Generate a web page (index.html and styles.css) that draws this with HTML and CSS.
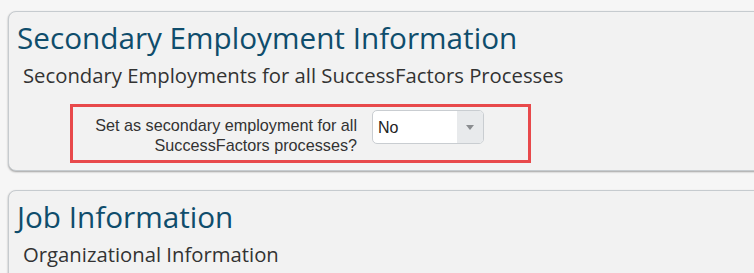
FILE: index.html
```html
<!DOCTYPE html>
<html lang="en">
<head>
  <meta charset="UTF-8">
  <title>Employment Information</title>
  <link rel="stylesheet" href="styles.css">
</head>
<body>
  <div class="page">
    <div class="card">
      <h2 class="card-title">Secondary Employment Information</h2>
      <div class="card-subtitle">Secondary Employments for all SuccessFactors Processes</div>
      <div class="field-row highlight">
        <label class="field-label">Set as secondary employment for all SuccessFactors processes?</label>
        <div class="select">
          <span class="select-value">No</span>
          <span class="select-btn"><span class="caret"></span></span>
        </div>
      </div>
    </div>

    <div class="card">
      <h2 class="card-title">Job Information</h2>
      <div class="card-subtitle">Organizational Information</div>
      <div class="card-spacer"></div>
    </div>
  </div>
</body>
</html>
```

FILE: styles.css
```css
html, body {
  margin: 0;
  padding: 0;
  overflow: hidden;
}
body {
  background-color: #f6f6f6;
  font-family: "Open Sans", Arial, sans-serif;
}
.page {
  width: 820px;
  padding: 11px 0 0 8px;
}
.card {
  background-color: #f2f2f2;
  border: 1px solid #c6cbcf;
  border-radius: 8px;
  box-shadow: 0 1px 2px rgba(0,0,0,0.35);
  padding: 6px 0 7px 8px;
  margin-bottom: 19px;
}
.card-title {
  margin: 0;
  font-size: 29.7px;
  line-height: 40px;
  font-weight: normal;
  color: #0f4d6c;
}
.card-subtitle {
  margin: 4px 0 0 6px;
  font-size: 20.3px;
  line-height: 26px;
  color: #333;
}
.field-row {
  display: flex;
  align-items: flex-start;
  margin: 16px 0 0 53px;
}
.highlight {
  box-sizing: border-box;
  width: 461px;
  border: 3px solid #e8494b;
  padding: 3px 0 5px 0;
}
.field-label {
  width: 274px;
  margin: 5px 0 0 10px;
  font-family: Arial, "Liberation Sans", sans-serif;
  font-size: 16.2px;
  line-height: 20px;
  text-align: right;
  color: #333;
}
.select {
  display: flex;
  width: 112px;
  height: 34px;
  box-sizing: border-box;
  margin: 0 0 0 15px;
  border: 1px solid #c9cdd1;
  border-radius: 5px;
  background-color: #fff;
  overflow: hidden;
}
.select-value {
  flex: 1;
  padding: 8px 0 0 5px;
  font-family: Arial, "Liberation Sans", sans-serif;
  font-size: 16px;
  color: #222;
}
.select-btn {
  width: 26px;
  background-color: #e8eaec;
  display: flex;
  align-items: center;
  justify-content: center;
}
.caret {
  width: 0;
  height: 0;
  border-left: 4px solid transparent;
  border-right: 4px solid transparent;
  border-top: 5px solid #8a8d90;
}
.card-spacer {
  height: 40px;
}
```
